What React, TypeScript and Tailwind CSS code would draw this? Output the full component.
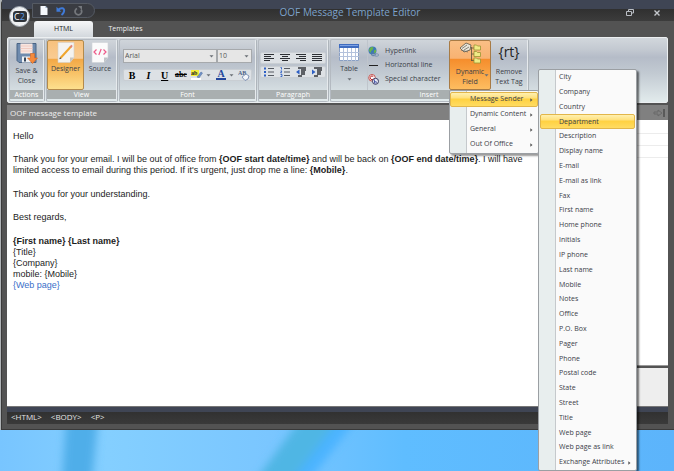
import React from 'react';

const ui = 'font-["Open_Sans","Noto_Sans",sans-serif]';

const senderFields = [
  'City', 'Company', 'Country', 'Department', 'Description', 'Display name',
  'E-mail', 'E-mail as link', 'Fax', 'First name', 'Home phone', 'Initials',
  'IP phone', 'Last name', 'Mobile', 'Notes', 'Office', 'P.O. Box', 'Pager',
  'Phone', 'Postal code', 'State', 'Street', 'Title', 'Web page',
  'Web page as link', 'Exchange Attributes',
];

const fieldMenu = ['Message Sender', 'Dynamic Content', 'General', 'Out Of Office'];

function Caret({ className = '' }: { className?: string }) {
  return (
    <svg width="5" height="3" viewBox="0 0 5 3" className={className}>
      <path d="M0.5 0.3h4L2.5 2.6z" fill="#6b7076" />
    </svg>
  );
}

function SubArrow() {
  return (
    <svg width="3" height="4" viewBox="0 0 3 4" className="shrink-0">
      <path d="M0.3 0.2v3.6L2.5 2z" fill="#555" />
    </svg>
  );
}

function SaveIcon() {
  return (
    <svg width="22" height="21" viewBox="0 0 22 21">
      <path d="M1 0.500h19v19H3l-2-2z" fill="#6f8bae" stroke="#4a6484" />
      <path d="M4.500 0.500h12v10h-12z" fill="#f8e6e1" />
      <path d="M4.500 3h12M4.500 5.500h12M4.500 8h12" stroke="#edc4b9" strokeWidth="0.800" />
      <path d="M6 13.500h9v6H6z" fill="#eef1f4" />
      <path d="M8 14.500h2v4H8z" fill="#34445a" />
      <path d="M14.500 10.500h4v4.500h3l-5 5.500-5-5.500h3z" fill="#f58a3c" stroke="#d9641d" strokeWidth="0.600" />
    </svg>
  );
}

function DesignerIcon() {
  return (
    <svg width="18" height="21" viewBox="0 0 18 21">
      <path d="M1 0.500h16v15l-4 5H1z" fill="#f4f3f1" stroke="#d5d0c8" strokeWidth="0.600" />
      <path d="M17 15.500h-4v5z" fill="#c9c6c1" />
      <path d="M3.500 16L14 4.500" stroke="#f0a52c" strokeWidth="2" />
      <path d="M13.300 5.300L15 3.400" stroke="#e08379" strokeWidth="2" />
      <path d="M2.300 17.300l.7-2 1.300 1.200z" fill="#333" />
    </svg>
  );
}

function SourceIcon() {
  return (
    <svg width="18" height="21" viewBox="0 0 18 21">
      <path d="M1 0.500h16v15l-4 5H1z" fill="#fbfbfb" stroke="#d0d3d6" strokeWidth="0.600" />
      <path d="M17 15.500h-4v5z" fill="#bfc3c7" />
      <path d="M5.500 7.500L3 10l2.500 2.500M12.500 7.500L15 10l-2.500 2.500M10.200 7l-2.400 6" fill="none" stroke="#ee5a8a" strokeWidth="1.200" />
    </svg>
  );
}

function TableIcon() {
  return (
    <svg width="20" height="17" viewBox="0 0 20 17">
      <path d="M0.500 0.500h19v16H0.500z" fill="#fff" stroke="#8aa0c4" />
      <path d="M0 0h20v4H0z" fill="#3f6cc0" />
      <path d="M1 1h18v1H1z" fill="#7ea2e4" />
      <path d="M0 8.500h20M0 12.500h20M4.500 4v13M8.500 4v13M12.500 4v13M16.500 4v13" stroke="#b4c2dc" />
    </svg>
  );
}

function LinkIcon() {
  return (
    <svg width="11" height="11" viewBox="0 0 11 11">
      <circle cx="4.500" cy="4.500" r="4" fill="#3d78b8" />
      <path d="M1.500 2.500c2-2 3-1.500 4-1L4.500 4 3 5v2L1 5zM6 4.500l2-1v2.500L6 8z" fill="#67b34b" />
      <rect x="3.500" y="7.300" width="4" height="2.400" rx="1.200" fill="none" stroke="#567aa3" />
      <rect x="6.500" y="7.800" width="4" height="2.400" rx="1.200" fill="none" stroke="#7c96b5" />
    </svg>
  );
}

function SpecialIcon() {
  return (
    <svg width="11" height="11" viewBox="0 0 11 11">
      <circle cx="4" cy="3.800" r="3.300" fill="#fff" stroke="#c2504c" />
      <path d="M5.300 2.600a1.800 1.800 0 1 0 0 2.400" fill="none" stroke="#b22" />
      <circle cx="7.500" cy="7.300" r="3" fill="#e9ebf5" stroke="#39395f" />
      <path d="M6.500 5.500v3.500h1c1.500 0 1.500-1.500 0-1.500h-1" fill="none" stroke="#33439b" strokeWidth="0.800" />
    </svg>
  );
}

function FieldIcon() {
  return (
    <svg width="22" height="22" viewBox="0 0 22 22">
      <path d="M1 6l6-5 5 2-1 5-6 2z" fill="#e8e5da" stroke="#5c5548" strokeWidth="0.800" />
      <path d="M3 6.500l5-3.500M5 8l5-3M2 8l7 2" stroke="#6f6a5f" strokeWidth="0.800" />
      <path d="M12.500 5v14M12.500 6h3M12.500 12h3M12.500 18.500h3" stroke="#5b5038" strokeWidth="0.800" fill="none" />
      {[3, 9.5, 16].map((y) => (
        <path key={y} d={`M15 ${y}h2.500l1 1h3v4H15z`} fill="#f0eb86" stroke="#9a9432" strokeWidth="0.800" />
      ))}
    </svg>
  );
}

function HighlightIcon() {
  return (
    <svg width="12" height="10" viewBox="0 0 12 10">
      <path d="M0 0h8v6H0z" fill="#f4ee3c" />
      <text x="0" y="5" fontSize="6" fontWeight="bold" fontFamily="Liberation Serif, serif" fill="#222">ab</text>
      <path d="M6 7l4-5 1.500 1-3.500 5z" fill="#7294c9" stroke="#4b699c" strokeWidth="0.500" />
      <path d="M0 8h10v2H0z" fill="#fff" />
    </svg>
  );
}

function ClearIcon() {
  return (
    <svg width="12" height="11" viewBox="0 0 12 11">
      <text x="0" y="5" fontSize="6" fontWeight="bold" fontFamily="Liberation Serif, serif" fill="#4c6187">AB</text>
      <path d="M4 7l4-3 3 2-1 3-3 1.500z" fill="#f4f6fa" stroke="#6b82ab" strokeWidth="0.800" />
    </svg>
  );
}

type AlignKind = 'left' | 'center' | 'right' | 'justify';

function AlignIcon({ kind }: { kind: AlignKind }) {
  const lines = {
    left: 'M0 0.5h10M0 2.5h7M0 4.500h10M0 6.500h6',
    center: 'M0 0.5h10M2 2.5h6M0 4.500h10M2 6.500h6',
    right: 'M0 0.5h10M3 2.5h7M0 4.500h10M4 6.500h6',
    justify: 'M0 0.5h10M0 2.5h10M0 4.500h10M0 6.500h10',
  };
  return (
    <svg width="10" height="8" viewBox="0 0 10 8">
      <path d={lines[kind]} stroke="#2c2f34" strokeWidth="1.100" />
    </svg>
  );
}

function ListIcon({ kind }: { kind: 'bullet' | 'number' | 'outdent' | 'indent' }) {
  return (
    <svg width="10" height="10" viewBox="0 0 10 10">
      {kind === 'bullet' && <path d="M0 1.500h2M0 5h2M0 8.500h2" stroke="#2d5fc4" strokeWidth="1.800" />}
      {kind === 'number' && <path d="M0.500 0.500h1v2M0.500 4h1.500L0.500 5.800h1.500M0.500 7.500h1.500v2H0.500" fill="none" stroke="#2d5fc4" strokeWidth="0.900" />}
      {(kind === 'bullet' || kind === 'number') && <path d="M4 1.500h6M4 5h6M4 8.500h6" stroke="#565b63" />}
      {kind === 'outdent' && <path d="M3.500 2.500L0 5l3.500 2.500z" fill="#2d5fc4" />}
      {kind === 'indent' && <path d="M0 2.500L3.500 5 0 7.500z" fill="#2d5fc4" />}
      {(kind === 'outdent' || kind === 'indent') && (
        <path d="M2 1h8M5 3h5M5 5h4M5 7h4M2 9h4" stroke="#33363b" strokeWidth="1.300" />
      )}
    </svg>
  );
}

function Group({ label, className = '', children }: { label: string; className?: string; children: React.ReactNode }) {
  return (
    <section
      aria-label={label}
      className={`flex shrink-0 flex-col rounded-[2px] border border-[#b4bac1] border-r-[#e6eaed] shadow-[1px_0_0_#aeb5bb] ${className}`}
    >
      <div className="flex h-[50px]">{children}</div>
      <div className="h-[9px] bg-[#a9afb0] text-center leading-[9px] text-white">{label}</div>
    </section>
  );
}

function BigButton({ icon, children, className = '' }: { icon: React.ReactNode; children: React.ReactNode; className?: string }) {
  return (
    <button className={`flex flex-col items-center rounded-[2px] leading-[10px] ${className}`}>
      <span className="flex h-[23px] items-center">{icon}</span>
      {children}
    </button>
  );
}

function FontSelect({ label, value, className }: { label: string; value: string; className: string }) {
  return (
    <div className={`relative ${className}`}>
      <select
        aria-label={label}
        defaultValue={value}
        className="block h-[14px] w-full appearance-none border border-[#a6a9ac] bg-[#e6e6e6] pl-px text-[7px] text-[#555]"
      >
        <option>{value}</option>
      </select>
      <Caret className="pointer-events-none absolute top-[6px] right-[3px]" />
    </div>
  );
}

const iconRow = 'flex h-[12px] items-center rounded-[2px] border border-[#c9ced3] bg-[#dde1e5]';
const iconButton = 'flex h-full flex-1 items-center justify-center';

export default function App() {
  return (
    <div className={`relative flex min-h-screen flex-col overflow-hidden bg-[#7cc8ff] text-[7px] text-[#3a4048] ${ui}`}>
      <div className="flex flex-1 bg-[#aeb2b5] pl-px">
        <main className="flex min-w-0 flex-1 flex-col rounded-tl-[4px] border-b border-l border-[#3a3a3a] bg-[#535353]">

          <header className="relative flex h-[21px] items-center bg-[linear-gradient(#3f4554_0,#3f4554_9px,#303030_9px,#3c3c3c_21px)]">
            <div className="flex flex-1">
              <nav aria-label="Quick access" className="ml-[30px] flex h-[15px] w-[63px] items-center gap-[8px] rounded-r-full border border-[#555a63] bg-[#3a3c42] pl-[7px]">
                <button aria-label="New">
                  <svg width="8" height="9" viewBox="0 0 8 9"><path d="M0.500 0h5L7.500 2v7h-7z" fill="#f5f8fc" /><path d="M5.500 0v2h2" fill="#8fa4c0" /></svg>
                </button>
                <button aria-label="Undo">
                  <svg width="10" height="10" viewBox="0 0 10 10"><path d="M2 4c3-3 7-2 6 1.500C7.700 7 7 8 5.500 9" fill="none" stroke="#3f7ad8" strokeWidth="2" /><path d="M0.500 0.800v5h4.800z" fill="#3f7ad8" /></svg>
                </button>
                <button aria-label="Redo">
                  <svg width="9" height="10" viewBox="0 0 9 10"><path d="M3 2.500a3.300 3.300 0 1 0 4 1" fill="none" stroke="#74777c" strokeWidth="1.800" /><path d="M4 0h4v4z" fill="#74777c" /></svg>
                </button>
              </nav>
            </div>
            <h1 className="pt-[4px] pl-[38px] text-[10px] text-[#7da3cc]">OOF Message Template Editor</h1>
            <div className="flex flex-1 items-center justify-end gap-[20px] pt-[4px] pr-[14px]">
              <button aria-label="Restore">
                <svg width="8" height="7" viewBox="0 0 8 7"><path d="M2.500 2V0.500h5v3.500H6M0.500 2.500h5v4h-5z" fill="none" stroke="#b9bdc3" /></svg>
              </button>
              <button aria-label="Close">
                <svg width="6" height="6" viewBox="0 0 6 6"><path d="M0.500 0.500l5 5M5.500 0.500l-5 5" stroke="#c5c8cd" strokeWidth="1.400" /></svg>
              </button>
            </div>
            {/* round application button sits over the title bar and the tabs */}
            <button aria-label="Application menu" className="absolute top-[6px] left-[7px] z-10 flex size-[21px] items-center justify-center rounded-full border border-[#9ba2ab] bg-[#eef0f2]">
              <span className="flex h-[11px] w-[14px] items-center justify-center rounded-[3px] bg-[#2e3238] text-[9px] leading-[11px] text-white">
                C<span className="text-[#5b9be6]">2</span>
              </span>
            </button>
          </header>

          <nav aria-label="Ribbon tabs" className="flex h-[16px] pl-[32px]">
            <button className="w-[59px] rounded-t-[3px] bg-[linear-gradient(#f6f7f8,#d3d8dd)] text-[#222]">HTML</button>
            <button className="w-[65px] text-[#eee]">Templates</button>
          </nav>

          <div className="mr-[6px] ml-[5px] flex h-[66px] gap-[2px] rounded-[2px] border border-[#eceff1] bg-[linear-gradient(#d2d7dc_0%,#c3c9d1_18%,#b5bcc8_30%,#c2cad2_55%,#e2ebec_100%)] pt-px pl-px">
            <Group label="Actions" className="w-[35px]">
              <BigButton icon={<SaveIcon />} className="w-full pt-[2px]">
                <span className="pt-px">Save &amp;<br />Close</span>
              </BigButton>
            </Group>
            <Group label="View" className="w-[71px]">
              <BigButton
                icon={<DesignerIcon />}
                className="w-[37px] border border-[#b38a4c] bg-[linear-gradient(#f8c27e_0%,#f9cb92_36%,#f3a845_38%,#fde08e_100%)]"
              >
                Designer
              </BigButton>
              <BigButton icon={<SourceIcon />} className="w-[32px] pt-px">Source</BigButton>
            </Group>
            <Group label="Font" className="w-[137px]">
              <div className="flex flex-1 flex-col gap-[6px] px-[3px] pt-[9px]">
                <div className="flex">
                  <FontSelect label="Font name" value="Arial" className="flex-1" />
                  <FontSelect label="Font size" value="10" className="w-[35px]" />
                </div>
                <div className={`${iconRow} font-["Liberation_Serif",serif] text-[10px] text-black`}>
                  <button className={`${iconButton} font-bold`}>B</button>
                  <button className={`${iconButton} font-bold italic`}>I</button>
                  <button className={`${iconButton} font-bold underline`}>U</button>
                  <button className={`${iconButton} text-[8px] font-bold line-through`}>abc</button>
                  <button aria-label="Highlight" className="flex h-full w-[24px] items-center justify-center gap-[3px]"><HighlightIcon /><Caret /></button>
                  <button aria-label="Font color" className="flex h-full w-[24px] items-center justify-center gap-[3px]">
                    <span className="border-b-2 border-[#24479c] px-px leading-[8px] font-bold text-[#24479c]">A</span><Caret />
                  </button>
                  <button aria-label="Clear formatting" className="flex h-full w-[14px] items-center justify-center"><ClearIcon /></button>
                </div>
              </div>
            </Group>
            <Group label="Paragraph" className="w-[70px]">
              <div className="flex flex-1 flex-col gap-[2px] px-px pt-[12px]">
                <div className={iconRow}>
                  {(['left', 'center', 'right', 'justify'] as AlignKind[]).map((kind) => (
                    <button key={kind} aria-label={`Align ${kind}`} className={iconButton}><AlignIcon kind={kind} /></button>
                  ))}
                </div>
                <div className={iconRow}>
                  {(['bullet', 'number', 'outdent', 'indent'] as const).map((kind) => (
                    <button key={kind} aria-label={kind} className={iconButton}><ListIcon kind={kind} /></button>
                  ))}
                </div>
              </div>
            </Group>
            <Group label="Insert" className="w-[198px]">
              <BigButton icon={<TableIcon />} className="w-[36px] pt-px">Table<Caret className="mt-[4px]" /></BigButton>
              <div className="flex w-[82px] flex-col border-l border-[#bfc5cc] pt-[4px]">
                <button className="flex h-[14px] items-center gap-[6px]"><LinkIcon />Hyperlink</button>
                <button className="flex h-[14px] items-center gap-[6px] whitespace-nowrap"><span className="mx-px h-px w-[9px] bg-[#222]" />Horizontal line</button>
                <button className="flex h-[14px] items-center gap-[6px] whitespace-nowrap"><SpecialIcon />Special character</button>
              </div>
              <BigButton
                icon={<FieldIcon />}
                className="relative w-[42px] border border-[#a87b45] bg-[linear-gradient(#f9bf85_0%,#f8b272_36%,#f58d2c_38%,#fdbd60_100%)]"
              >
                <span className="pt-[3px]">Dynamic<br />Field</span>
                <Caret className="absolute right-[1px] bottom-[12px]" />
              </BigButton>
              <BigButton icon={<span className="text-[14px] text-[#222]">{'{rt}'}</span>} className="w-[36px] whitespace-nowrap">
                <span className="pt-[4px]">Remove<br />Text Tag</span>
              </BigButton>
            </Group>
          </div>

          <div className="mt-[2px] mr-[6px] ml-[5px] flex h-[15px] items-center justify-between bg-[#808080] px-[3px] text-[8px] text-[#eee]">
            <h2>OOF message template</h2>
            <button aria-label="Collapse panel">
              <svg width="12" height="8" viewBox="0 0 12 8"><path d="M1 3h4V1l4 3-4 3V5H1z" fill="none" stroke="#686868" /><path d="M11 0v8" stroke="#333" /></svg>
            </button>
          </div>

          <div className="mr-[6px] ml-[5px] flex flex-1">
            <article className='min-w-0 flex-1 bg-white pt-[11px] pl-[6px] font-["Liberation_Sans",Arial,sans-serif] text-[9px] leading-[11px] text-[#1c1c1c]'>
              <p className="mb-[12px]">Hello</p>
              <p className="mb-[13px] max-w-[512px]">
                Thank you for your email. I will be out of office from <b>{'{OOF start date/time}'}</b> and will be back on <b>{'{OOF end date/time}'}</b>. I will have limited access to email during this period. If it's urgent, just drop me a line: <b>{'{Mobile}'}</b>.
              </p>
              <p className="mb-[12px]">Thank you for your understanding.</p>
              <p className="mb-[13px]">Best regards,</p>
              <p><b>{'{First name} {Last name}'}</b></p>
              <p>{'{Title}'}</p>
              <p>{'{Company}'}</p>
              <p>mobile: {'{Mobile}'}</p>
              <p><a href="#" className="text-[#3b6fc9]">{'{Web page}'}</a></p>
            </article>
            <aside className="flex w-[90px] flex-col">
              <div className="flex-1 border-b border-[#999] bg-white pt-[2px]">
                <div className="h-[12px] border-b border-[#ececec]" />
                <div className="h-[12px] border-b border-[#ececec]" />
                <div className="h-[12px] border-b border-[#ececec]" />
              </div>
              <div className="mt-[2px] h-[38px] bg-[#eee]" />
            </aside>
          </div>

          <footer className="mr-[6px] mb-[5px] ml-[5px] flex h-[18px] items-center gap-[9px] border-t border-[#777] bg-[linear-gradient(#3f4554_0,#3f4554_5px,#313131_5px,#3a3a3a_100%)] pt-[3px] pl-[4px] text-[8px] text-[#e4e4e4]">
            <span>&lt;HTML&gt;</span>
            <span>&lt;BODY&gt;</span>
            <span>&lt;P&gt;</span>
          </footer>
        </main>
      </div>

      {/* strip of desktop wallpaper below the window */}
      <svg className="h-[41px] w-full" viewBox="0 0 674 41" preserveAspectRatio="none">
        <defs>
          <linearGradient id="sky">
            <stop offset="0" stopColor="#78c5ff" />
            <stop offset="0.16" stopColor="#84cfff" />
            <stop offset="0.4" stopColor="#7ac6ff" />
            <stop offset="0.6" stopColor="#5fbdff" />
            <stop offset="1" stopColor="#5cb4fb" />
          </linearGradient>
          <filter id="soft" x="-30%" y="-30%" width="160%" height="160%"><feGaussianBlur stdDeviation="4" /></filter>
        </defs>
        <path d="M0 0h674v41H0z" fill="url(#sky)" />
        <g filter="url(#soft)">
          <path d="M66 -10h32l-6 60H62z" fill="#4faee9" />
          <path d="M300 -10h38l-42 60h-40z" fill="#4fb6e4" />
          <path d="M338 -10h18l-46 60h-18z" fill="#4bb4ff" />
        </g>
      </svg>

      <ul role="menu" aria-label="Dynamic Field" className="absolute top-[90px] left-[449px] z-20 w-[90px] rounded-[2px] border border-[#9b9fa3] bg-[linear-gradient(90deg,#e8eeee_16px,#c5c9cc_16px,#c5c9cc_17px,#fafafa_17px)] py-px shadow-[2px_2px_2px_#0006]">
        {fieldMenu.map((item, i) => (
          <li key={item} role="none">
            <button
              role="menuitem"
              className={`flex h-[15px] w-full items-center justify-between rounded-[2px] border pr-[4px] pl-[19px] ${
                i === 0 ? 'border-[#e2b64a] bg-[linear-gradient(#fff0b0,#ffe07a_40%,#ffd140_45%,#ffdc62)]' : 'border-transparent'
              }`}
            >
              {item}
              <SubArrow />
            </button>
          </li>
        ))}
      </ul>

      <ul role="menu" aria-label="Message Sender" className="absolute top-[69px] bottom-0 left-[538px] z-30 flex w-[99px] flex-col rounded-[2px] border border-[#9b9fa3] bg-[linear-gradient(90deg,#e8eeee_16px,#c5c9cc_16px,#c5c9cc_17px,#fafafa_17px)] shadow-[2px_2px_2px_#0008]">
        {senderFields.map((item) => (
          <li key={item} role="none" className="flex min-h-0 flex-1 px-px">
            <button
              role="menuitem"
              className={`flex w-full items-center justify-between rounded-[2px] border pr-[3px] pl-[18px] whitespace-nowrap ${
                item === 'Department' ? 'border-[#e2b64a] bg-[linear-gradient(#fff0b0,#ffe07a_40%,#ffd140_45%,#ffdc62)]' : 'border-transparent'
              }`}
            >
              {item}
              {item === 'Exchange Attributes' && <SubArrow />}
            </button>
          </li>
        ))}
      </ul>
    </div>
  );
}
